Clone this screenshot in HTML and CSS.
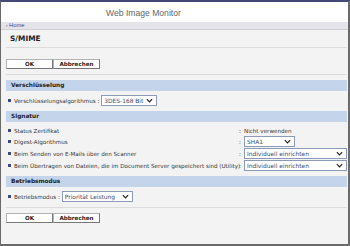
FILE: index.html
```html
<!DOCTYPE html>
<html lang="de">
<head>
    <meta charset="UTF-8">
    <title>Web Image Monitor - S/MIME</title>
    <link rel="stylesheet" href="styles.css">
</head>
<body>
<div class="frame">
    <div class="top">Web Image Monitor</div>
    <div class="crumb"><span class="arrow">‹</span> Home</div>
    <div class="content">
        <h1>S/MIME</h1>
        <div class="buttons">
            <button>OK</button>
            <button>Abbrechen</button>
        </div>

        <h2>Verschlüsselung</h2>
        <div class="row">
            <span class="dot"></span>
            <span class="label">Verschlüsselungsalgorithmus :</span>
            <div class="select w56">3DES-168 Bit<svg viewBox="0 0 8 5"><path d="M1 1l3 3 3-3"/></svg></div>
        </div>

        <h2>Signatur</h2>
        <div class="row short">
            <span class="dot"></span>
            <span class="label grow">Status Zertifikat</span>
            <div class="field"><span class="colon">:</span>Nicht verwenden</div>
        </div>
        <div class="row">
            <span class="dot"></span>
            <span class="label grow">Digest-Algorithmus</span>
            <div class="field">
                <span class="colon">:</span>
                <div class="select w51">SHA1<svg viewBox="0 0 8 5"><path d="M1 1l3 3 3-3"/></svg></div>
            </div>
        </div>
        <div class="row">
            <span class="dot"></span>
            <span class="label grow">Beim Senden von E-Mails über den Scanner</span>
            <div class="field">
                <span class="colon">:</span>
                <div class="select wide">Individuell einrichten<svg viewBox="0 0 8 5"><path d="M1 1l3 3 3-3"/></svg></div>
            </div>
        </div>
        <div class="row">
            <span class="dot"></span>
            <span class="label grow">Beim Übertragen von Dateien, die im Document Server gespeichert sind (Utility)</span>
            <div class="field">
                <span class="colon">:</span>
                <div class="select wide">Individuell einrichten<svg viewBox="0 0 8 5"><path d="M1 1l3 3 3-3"/></svg></div>
            </div>
        </div>

        <h2>Betriebsmodus</h2>
        <div class="row">
            <span class="dot"></span>
            <span class="label">Betriebsmodus :</span>
            <div class="select w71">Priorität Leistung<svg viewBox="0 0 8 5"><path d="M1 1l3 3 3-3"/></svg></div>
        </div>

        <div class="buttons bottom">
            <button>OK</button>
            <button>Abbrechen</button>
        </div>
    </div>
</div>
</body>
</html>
```
FILE: styles.css
```css
html, body {
    margin: 0;
    padding: 0;
}
body {
    font-family: "DejaVu Sans", Verdana, sans-serif;
    font-size: 5.6px;
    color: #333;
    background: #fff;
}
.frame {
    box-sizing: border-box;
    width: 350px;
    height: 246px;
    border-top: 2px solid #434a78;
    border-left: 1px solid #6a6a6a;
    border-right: 2px solid #6a6a6a;
    border-bottom: 2px solid #6a6a6a;
    background: #f3f3f3;
}
.top {
    height: 20px;
    background: #fff;
    padding-left: 105px;
    font-family: "Liberation Sans", Arial, sans-serif;
    font-size: 8.6px;
    color: #666;
    line-height: 22px;
}
.crumb {
    height: 7px;
    line-height: 7px;
    background: #e4e4ea;
    border-bottom: 1px solid #cfcfd4;
    padding-left: 5px;
    font-family: "Liberation Sans", Arial, sans-serif;
    font-size: 5.8px;
    color: #3a4c9a;
}
.arrow {
    font-size: 4.5px;
}
.content {
    padding: 0 1px 0 5px;
}
h1 {
    margin: 0;
    height: 17px;
    line-height: 18px;
    padding-left: 4px;
    font-size: 7.4px;
    font-weight: bold;
    color: #222;
    border-bottom: 1px solid #dcdcdc;
}
.buttons {
    display: flex;
    padding: 11px 0 5px;
    border-bottom: 1px solid #dcdcdc;
}
.buttons.bottom {
    padding-top: 5px;
    border-bottom: none;
    border-top: 1px solid #dcdcdc;
    margin-top: 5px;
}
button {
    width: 47px;
    height: 10px;
    padding: 0;
    background: #fff;
    border: 1px solid #b4b4b4;
    border-right-color: #777;
    border-bottom-color: #777;
    font-family: "DejaVu Sans", Verdana, sans-serif;
    font-size: 5.6px;
    font-weight: bold;
    color: #222;
    line-height: 8px;
}
h2 {
    margin: 5px 0 0;
    height: 11px;
    line-height: 11px;
    padding-left: 5px;
    background: #c4d4ea;
    font-size: 5.8px;
    font-weight: bold;
    color: #222;
}
.row {
    display: flex;
    align-items: center;
    height: 11px;
    margin-top: 1px;
    padding-left: 2px;
}
.row.short {
    height: 9px;
    margin-top: 4px;
}
h2 + .row {
    margin-top: 4px;
}
.dot {
    width: 3px;
    height: 3px;
    background: #3b4a80;
    margin-right: 3px;
    flex: none;
}
.label {
    white-space: nowrap;
    margin-right: 2px;
}
.grow {
    flex: 1;
    min-width: 0;
}
.field {
    width: 108px;
    flex: none;
    display: flex;
    align-items: center;
    justify-content: flex-end;
}
.short .field {
    justify-content: flex-start;
}
.colon {
    flex: 1;
}
.short .colon {
    flex: none;
    width: 5px;
}
.select {
    box-sizing: border-box;
    height: 11px;
    background: #fff;
    border: 1px solid #8a9ab8;
    display: flex;
    align-items: center;
    justify-content: space-between;
    padding: 0 3px 0 2px;
    color: #3a4a6a;
    font-size: 5.9px;
}
.select svg {
    width: 7px;
    height: 5px;
    fill: none;
    stroke: #222;
    stroke-width: 1.4;
}
.field .w51 {
    margin-right: 52px;
}
.w56 { width: 56px; }
.w51 { width: 51px; }
.w71 { width: 71px; }
.wide { width: 103px; }
```
